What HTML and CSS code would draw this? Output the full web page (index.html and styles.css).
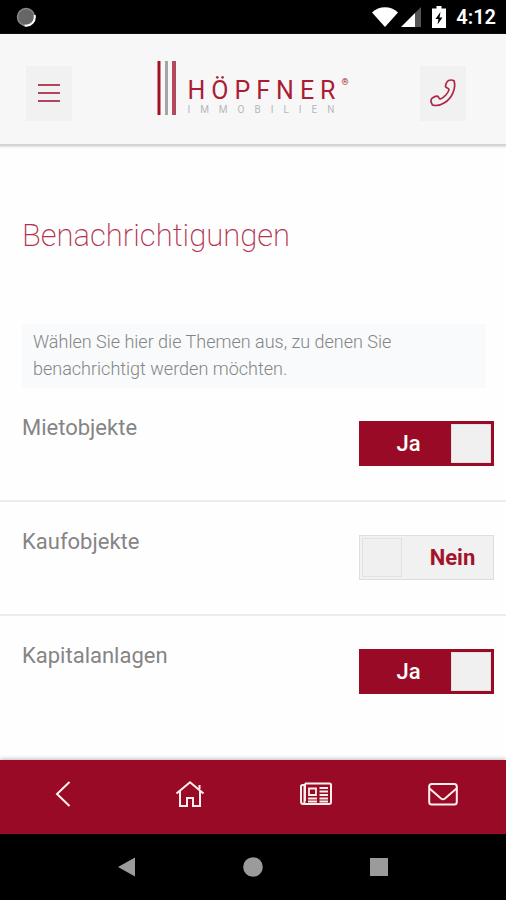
FILE: index.html
```html
<!DOCTYPE html>
<html lang="de">
<head>
<meta charset="utf-8">
<meta name="viewport" content="width=device-width, initial-scale=1">
<title>Benachrichtigungen</title>
<link rel="stylesheet" href="styles.css">
</head>
<body>
<div class="status-bar">
  <svg class="status-sync" viewBox="0 0 20 20" aria-hidden="true"><circle cx="10" cy="10" r="8.5" fill="#666" stroke="#888" stroke-width="1.5"/><path d="M18.6 8a8.8 8.8 0 0 1-10 10.6" fill="none" stroke="#fff" stroke-width="2"/></svg>
  <div class="status-right">
    <svg class="status-wifi" viewBox="0 0 26 20" aria-hidden="true"><path d="M0 5.5C7-1.6 19-1.6 26 5.5L13 20Z" fill="#fff"/></svg>
    <svg class="status-signal" viewBox="0 0 20 20" aria-hidden="true"><path d="M14 6V20H0Z" fill="#fff"/><path d="M14 6L20 0V20H14Z" fill="#555"/></svg>
    <svg class="status-battery" viewBox="0 0 14 22" aria-hidden="true"><path d="M4.500 0h5v2.500H14V22H0V2.500h4.500Z" fill="#fff"/><path d="M8.500 6L3.500 13h3L5.500 18.500l5-7h-3Z" fill="#000"/></svg>
    <span class="clock">4:12</span>
  </div>
</div>

<header class="header">
  <button class="header-button" type="button" aria-label="Menü">
    <svg class="icon-menu" viewBox="0 0 22 20" aria-hidden="true"><path d="M0 2h22M0 10h22M0 18h22" stroke="#b2455b" stroke-width="2"/></svg>
  </button>
  <a class="logo" href="#">
    <svg class="logo-bars" viewBox="0 0 20 54" aria-hidden="true"><path d="M2 0V54" stroke="#a11222" stroke-width="3"/><path d="M9.500 0V54" stroke="#a4a6a6" stroke-width="3"/><path d="M17 0V54" stroke="#b04a5c" stroke-width="4"/></svg>
    <span class="logo-text">
      <span class="logo-name">HÖPFNER<sup class="logo-mark">®</sup></span>
      <span class="logo-sub">IMMOBILIEN</span>
    </span>
  </a>
  <button class="header-button" type="button" aria-label="Anrufen">
    <svg class="icon-phone" viewBox="0 0 26 28" aria-hidden="true"><path d="M18.500 1.500C20 1 22.500 .8 24 1.800C26.500 9.500 21.500 19.500 14.500 23.800C11 26 6 27 2.500 26C1.500 24.500 .8 22.500 1 21C1.300 19 5.500 17 7.200 17.200C8.800 17.500 9 20.300 10.500 20C14 18.500 18.500 14 19 10.500C18.800 9 15.800 9 15.500 7.500C15.300 6 16.800 2.300 18.500 1.500Z" fill="none" stroke="#ad2444" stroke-width="1.700" stroke-linejoin="round"/></svg>
  </button>
</header>

<main class="content">
  <h1 class="title">Benachrichtigungen</h1>
  <p class="notice">Wählen Sie hier die Themen aus, zu denen Sie benachrichtigt werden möchten.</p>
  <ul class="topics">
    <li class="topic">
      <label class="topic-name" for="miet">Mietobjekte</label>
      <label class="switch"><input class="switch-knob" type="checkbox" id="miet" checked><span class="switch-text">Ja</span></label>
    </li>
    <li class="topic">
      <label class="topic-name" for="kauf">Kaufobjekte</label>
      <label class="switch"><input class="switch-knob" type="checkbox" id="kauf"><span class="switch-text">Nein</span></label>
    </li>
    <li class="topic">
      <label class="topic-name" for="kapital">Kapitalanlagen</label>
      <label class="switch"><input class="switch-knob" type="checkbox" id="kapital" checked><span class="switch-text">Ja</span></label>
    </li>
  </ul>
</main>

<nav class="tab-bar">
  <a class="tab" href="#" aria-label="Zurück"><svg class="tab-icon" viewBox="0 0 32 28" aria-hidden="true"><path d="M22.500 2L10 14L22.500 26"/></svg></a>
  <a class="tab" href="#" aria-label="Startseite"><svg class="tab-icon" viewBox="0 0 32 28" aria-hidden="true"><path d="M2.500 13.500L16 2.200L29.500 13.500M6 11V26H13V18H19V26H26V11M25.500 9V5"/></svg></a>
  <a class="tab" href="#" aria-label="Neuigkeiten"><svg class="tab-icon" viewBox="0 0 32 28" aria-hidden="true"><path d="M5 3.500H29.500Q31 3.500 31 5V22Q31 24 29 24H3.500Q1 24 1 21.500V6.500Q1 5 2.500 5H4.500V21.500Q4.500 24 3.500 24M5 3.500V21"/><path d="M9 8.500H16V15H9ZM8 18.500H17M8 21.500H17M19.500 8H28M19.500 11.500H28M19.500 15H28M19.500 18.500H28M19.500 21.500H28" stroke-width="1.800"/></svg></a>
  <a class="tab" href="#" aria-label="Nachricht"><svg class="tab-icon" viewBox="0 0 32 28" aria-hidden="true"><rect x="2.200" y="4" width="27.600" height="20.500" rx="2.500"/><path d="M2.500 8.500L14 18.500Q16 20 18 18.500L29.500 8.500"/></svg></a>
</nav>

<div class="system-bar">
  <button class="system-button" type="button" aria-label="System zurück"><svg class="system-icon" viewBox="0 0 20 20" aria-hidden="true"><path d="M18 .5V19.500L1 10Z"/></svg></button>
  <button class="system-button" type="button" aria-label="System Start"><svg class="system-icon" viewBox="0 0 20 20" aria-hidden="true"><circle cx="10" cy="10" r="9.800"/></svg></button>
  <button class="system-button" type="button" aria-label="System Übersicht"><svg class="system-icon" viewBox="0 0 20 20" aria-hidden="true"><path d="M1 1H19V19H1Z"/></svg></button>
</div>
</body>
</html>
```
FILE: styles.css
```css
* {
  box-sizing: border-box;
}

body {
  margin: 0;
  min-height: 100vh;
  display: flex;
  flex-direction: column;
  background: #fefefe;
  font-family: Roboto, "Liberation Sans", sans-serif;
  color: #858585;
}

button {
  border: 0;
  padding: 0;
  background: none;
}

svg {
  display: block;
}

.status-bar {
  height: 34px;
  padding: 0 10px 0 16px;
  display: flex;
  align-items: center;
  justify-content: space-between;
  background: #000;
  color: #fff;
}

.status-sync {
  width: 20px;
  height: 20px;
}

.status-right {
  display: flex;
  align-items: center;
}

.status-wifi {
  width: 26px;
  height: 20px;
  margin-right: 3px;
}

.status-signal {
  width: 20px;
  height: 20px;
  margin-right: 11px;
}

.status-battery {
  width: 14px;
  height: 22px;
  margin-right: 10px;
}

.clock {
  font-size: 20px;
  font-weight: 600;
  line-height: 24px;
}

.header {
  height: 112px;
  padding: 8px 40px 0 26px;
  display: flex;
  align-items: center;
  justify-content: space-between;
  background: #f7f7f7;
  border-bottom: 2px solid #d4d4d4;
  box-shadow: 0 1px 2px #ddd;
}

.header-button {
  width: 46px;
  height: 55px;
  display: flex;
  align-items: center;
  justify-content: center;
  background: #f1f1f1;
}

.icon-menu {
  width: 22px;
  height: 20px;
}

.icon-phone {
  width: 26px;
  height: 28px;
}

.logo {
  margin: 0 0 10px 14px;
  display: flex;
  align-items: flex-end;
  gap: 10px;
  text-decoration: none;
}

.logo-bars {
  width: 20px;
  height: 54px;
}

.logo-text {
  display: flex;
  flex-direction: column;
}

.logo-name {
  display: flex;
  font-size: 25px;
  line-height: 28px;
  letter-spacing: 6px;
  color: #ab1c35;
}

.logo-mark {
  font-size: 9px;
  line-height: 10px;
  letter-spacing: 0;
}

.logo-sub {
  font-size: 10px;
  line-height: 10px;
  letter-spacing: 10px;
  color: #b8b8b8;
}

.content {
  flex: 1;
}

.title {
  margin: 70px 22px 68px;
  font-size: 31px;
  font-weight: 200;
  line-height: 40px;
  color: #b4324d;
}

.notice {
  margin: 0 20px 0 22px;
  padding: 4px 80px 6px 11px;
  background: #f8fafb;
  font-size: 18px;
  font-weight: 300;
  line-height: 27px;
}

.topics {
  margin: 0;
  padding: 0;
  list-style: none;
}

.topic {
  height: 114px;
  padding: 26px 12px 0 22px;
  display: flex;
  align-items: flex-start;
  justify-content: space-between;
  border-bottom: 2px solid #ececec;
}

.topic:last-child {
  border-bottom: 0;
}

.topic-name {
  font-size: 22px;
  line-height: 28px;
}

.switch {
  width: 135px;
  height: 45px;
  margin-top: 7px;
  padding: 2px;
  display: flex;
  align-items: center;
  background: #f1f1f1;
  border: 1px solid #dedede;
  color: #a3142c;
  font-size: 22px;
  font-weight: 700;
}

.switch-knob {
  appearance: none;
  width: 40px;
  height: 39px;
  margin: 0;
  background: #f0f0f0;
  border: 1px solid #e2e2e2;
}

.switch-text {
  flex: 1;
  padding-left: 12px;
  text-align: center;
}

.switch:has(:checked) {
  flex-direction: row-reverse;
  background: #990a26;
  border-color: #990a26;
  color: #fff;
  font-weight: 500;
}

.switch:has(:checked) .switch-text {
  padding-left: 4px;
}

.tab-bar {
  height: 74px;
  padding-bottom: 6px;
  display: grid;
  grid-template-columns: repeat(4, 1fr);
  background: #990a26;
  box-shadow: 0 -1px 4px #bbb;
}

.tab {
  display: flex;
  align-items: center;
  justify-content: center;
}

.tab-icon {
  width: 32px;
  height: 28px;
  fill: none;
  stroke: #fff0ee;
  stroke-width: 2;
}

.system-bar {
  height: 66px;
  padding: 0 64px;
  display: grid;
  grid-template-columns: repeat(3, 1fr);
  background: #000;
}

.system-button {
  display: flex;
  align-items: center;
  justify-content: center;
}

.system-icon {
  width: 20px;
  height: 20px;
  fill: #9b9b9b;
}
```
